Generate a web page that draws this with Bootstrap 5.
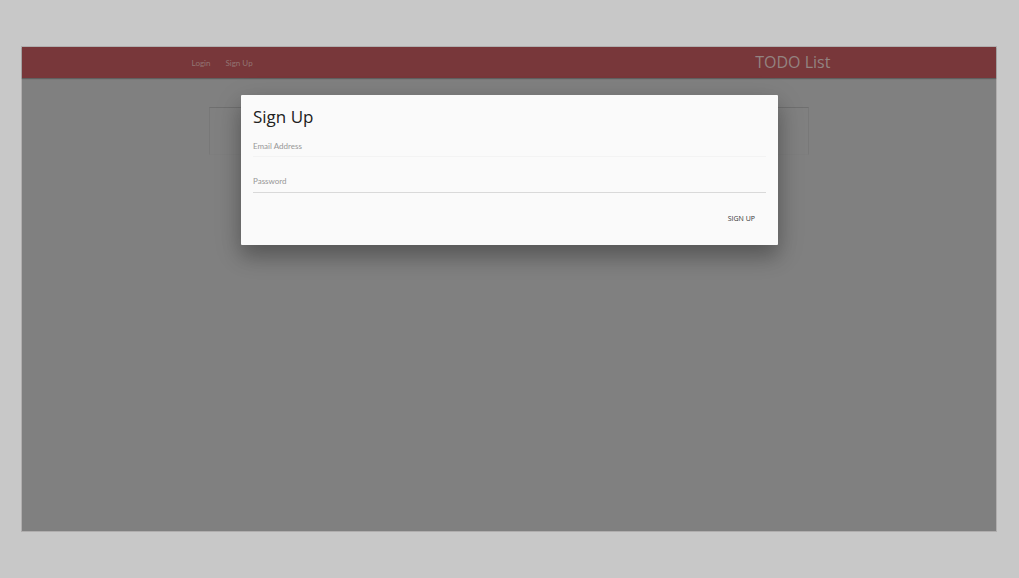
<!DOCTYPE html>
<html lang="en">
<head>
<meta charset="utf-8">
<meta name="viewport" content="width=device-width, initial-scale=1">
<title>TODO List</title>
<link href="https://cdn.jsdelivr.net/npm/bootstrap@5.3.0/dist/css/bootstrap.min.css" rel="stylesheet">
<style>
  body { background: #c8c8c8; font-family: Lato, "Open Sans", sans-serif; font-size: 8px; color: #212121; padding: 47px 23px 47px 22px; }
  .app { background: #808080; box-shadow: 0 0 0 1px #b0aeae; }
  .topbar { background: #78373a; height: 31px; box-shadow: 0 1px 1px #606060; }
  .topbar-inner { width: 66%; padding: 0 0 0 4px; }
  .topbar a { color: #937573; text-decoration: none; }
  .topbar .title { font-family: "Open Sans", sans-serif; color: #938381; font-size: 16px; line-height: 24px; margin-top: -2px; }
  .links { gap: 15px; }
  .todo-box { width: 600px; max-width: 90%; height: 48px; margin-top: 29px; border: 1px solid #787878; border-top-color: #6f6f6f; border-bottom-color: #7e7e7e; }
  .signup { top: 48px; left: 219px; right: 218px; height: 150px; padding: 8px 12px; background: #fafafa; border-radius: 1px; box-shadow: 0 12px 19px rgba(0,0,0,.2), 0 8px 28px rgba(0,0,0,.18); }
  .signup h1 { font-family: "Open Sans", sans-serif; font-size: 17px; line-height: 27px; font-weight: 400; color: #212121; margin-bottom: 4px; }
  .field { height: 23px; margin-bottom: 12px; }
  .field input { height: 23px; padding: 0; border: 0; border-bottom: 1px solid #f3f3f3; background: transparent; outline: 0; font-size: 8px; }
  .field label { top: 6px; left: 0; line-height: 12px; color: #979797; }
  .field.last { height: 24px; }
  .field.last input { height: 24px; border-bottom-color: #d9d9d9; }
  .submit { border: 0; background: transparent; color: #343434; font-family: "Open Sans", sans-serif; font-size: 7px; line-height: 14px; padding: 7px 11px; }
</style>
</head>
<body class="min-vh-100 d-flex m-0">
<div class="app position-relative flex-grow-1">
  <nav class="topbar d-flex justify-content-center">
    <div class="topbar-inner d-flex align-items-center justify-content-between">
      <div class="links d-flex"><a href="#">Login</a><a href="#">Sign Up</a></div>
      <a class="title" href="#">TODO List</a>
    </div>
  </nav>
  <main class="todo-box mx-auto"></main>
  <form class="signup position-absolute" role="dialog" aria-labelledby="signup-title">
    <h1 id="signup-title">Sign Up</h1>
    <div class="field position-relative">
      <input id="email" type="email" class="w-100 d-block">
      <label for="email" class="position-absolute">Email Address</label>
    </div>
    <div class="field last position-relative">
      <input id="password" type="password" class="w-100 d-block">
      <label for="password" class="position-absolute">Password</label>
    </div>
    <div class="d-flex justify-content-end"><button type="button" class="submit">SIGN UP</button></div>
  </form>
</div>
<script src="https://cdn.jsdelivr.net/npm/bootstrap@5.3.0/dist/js/bootstrap.bundle.min.js"></script>
</body>
</html>
